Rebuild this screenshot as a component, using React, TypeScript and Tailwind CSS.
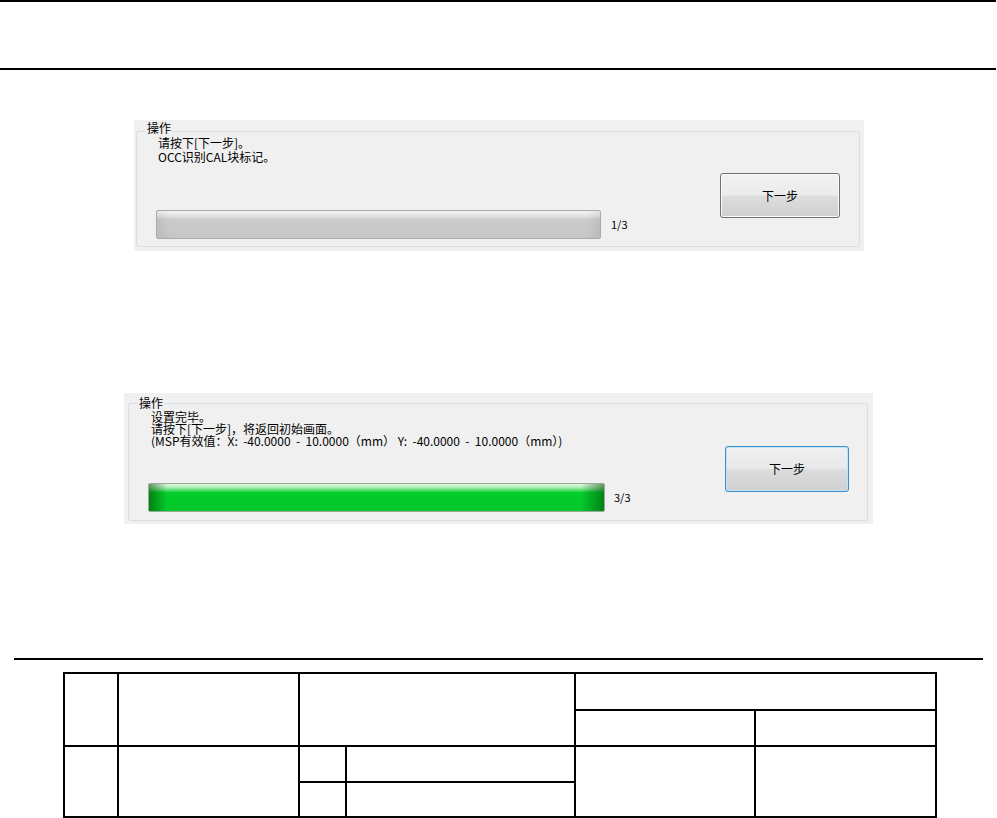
import React from 'react';

const font = "font-['Noto_Sans_CJK_SC',sans-serif]";

type PanelProps = {
  lines: string[];
  progress: 'idle' | 'done';
  count: string;
  active?: boolean;
};

const GrayBar = () => (
  <div className="w-[445px] h-[29px] rounded-[2px] border border-[#a9a9a9] bg-[linear-gradient(to_right,rgba(0,0,0,0.06),transparent_3%,transparent_97%,rgba(0,0,0,0.06)),linear-gradient(to_bottom,#f4f4f4_0%,#e2e2e2_18%,#cbcbcb_32%,#c6c6c6_100%)]" />
);

const GreenBar = () => (
  <div className="w-[457px] h-[29px] rounded-[2px] border border-[#9aa99a] bg-[linear-gradient(to_right,rgba(0,70,0,0.55),transparent_4%,transparent_95%,rgba(0,70,0,0.55)),linear-gradient(to_bottom,#e2fae2_0%,#a6ecae_14%,#04cd2c_32%,#03c82a_100%)]" />
);

const NextButton = ({ active }: { active?: boolean }) => (
  <button
    type="button"
    className={
      active
        ? `w-[124px] h-[46px] mt-[42px] rounded-[3px] border border-[#3d8fc9] shadow-[inset_0_0_0_1px_#bfe3f7] bg-[linear-gradient(to_bottom,#f0f0f0_0%,#e9e9e9_48%,#dcdcdc_52%,#d0d0d0_100%)] text-[12px] text-black ${font}`
        : `w-[120px] h-[45px] mt-[41px] rounded-[3px] border border-[#707070] shadow-[inset_0_0_0_1px_#fbfbfb] bg-[linear-gradient(to_bottom,#f2f2f2_0%,#ebebeb_48%,#dddddd_52%,#cfcfcf_100%)] text-[12px] text-black ${font}`
    }
  >
    下一步
  </button>
);

const OperationPanel = ({ lines, progress, count, active }: PanelProps) => {
  const done = progress === 'done';
  return (
    <div
      className={
        done
          ? 'ml-[124px] mt-[142px] w-[749px] h-[131px] bg-[#f0f0f0] pl-[4px] pr-[5px] pt-[10px] pb-[3px]'
          : 'ml-[134px] mt-[50px] w-[730px] h-[131px] bg-[#f0f0f0] pl-[2px] pr-[4px] pt-[11px] pb-[4px]'
      }
    >
      <div className={`relative h-full rounded-[3px] border border-[#d5dfe5] flex pl-[19px] ${font} text-[12px] text-black`}>
        <span
          className={
            done
              ? 'absolute -top-[8px] left-[9px] px-[1px] bg-[#f0f0f0] leading-[14px]'
              : 'absolute -top-[11px] left-[9px] px-[1px] bg-[#f0f0f0] leading-[14px]'
          }
        >
          操作
        </span>
        <div className={done ? 'w-[577px]' : 'w-[564px]'}>
          <div className={done ? 'pl-[3px] pt-[7px] leading-[12px]' : 'pl-[2px] pt-[4px] leading-[14px]'}>
            {lines.map((l) => (
              <div key={l} className="whitespace-pre">
                {l}
              </div>
            ))}
          </div>
          <div className={done ? 'flex items-center mt-[36px]' : 'flex items-center mt-[46px]'}>
            {done ? <GreenBar /> : <GrayBar />}
            <span className={done ? 'ml-[9px] text-[11px]' : 'ml-[10px] text-[11px]'}>{count}</span>
          </div>
        </div>
        <NextButton active={active} />
      </div>
    </div>
  );
};

const cell = 'border-2 border-black p-0';

export default function App() {
  return (
    <div className="w-[997px] h-[818px] bg-white overflow-hidden">
      <div className="w-[996px] h-[2px] bg-black" />
      <div className="mt-[66px] w-[996px] h-[2px] bg-black" />

      <OperationPanel
        lines={['请按下[下一步]。', 'OCC识别CAL块标记。']}
        progress="idle"
        count="1/3"
      />

      <OperationPanel
        lines={[
          '设置完毕。',
          '请按下[下一步]，将返回初始画面。',
          '(MSP有效值：X:  -40.0000  -  10.0000（mm） Y:  -40.0000  -  10.0000（mm）)',
        ]}
        progress="done"
        count="3/3"
        active
      />

      <div className="mt-[134px] ml-[14px] w-[969px] h-[2px] bg-black" />

      <table className="mt-[12px] ml-[63px] w-[872px] table-fixed border-collapse">
        <colgroup>
          <col className="w-[54px]" />
          <col className="w-[181px]" />
          <col className="w-[47px]" />
          <col className="w-[229px]" />
          <col className="w-[180px]" />
          <col className="w-[181px]" />
        </colgroup>
        <tbody>
          <tr className="h-[37px]">
            <td rowSpan={2} className={cell} />
            <td rowSpan={2} className={cell} />
            <td rowSpan={2} colSpan={2} className={cell} />
            <td colSpan={2} className={cell} />
          </tr>
          <tr className="h-[36px]">
            <td className={cell} />
            <td className={cell} />
          </tr>
          <tr className="h-[36px]">
            <td rowSpan={2} className={cell} />
            <td rowSpan={2} className={cell} />
            <td className={cell} />
            <td className={cell} />
            <td rowSpan={2} className={cell} />
            <td rowSpan={2} className={cell} />
          </tr>
          <tr className="h-[35px]">
            <td className={cell} />
            <td className={cell} />
          </tr>
        </tbody>
      </table>
    </div>
  );
}
